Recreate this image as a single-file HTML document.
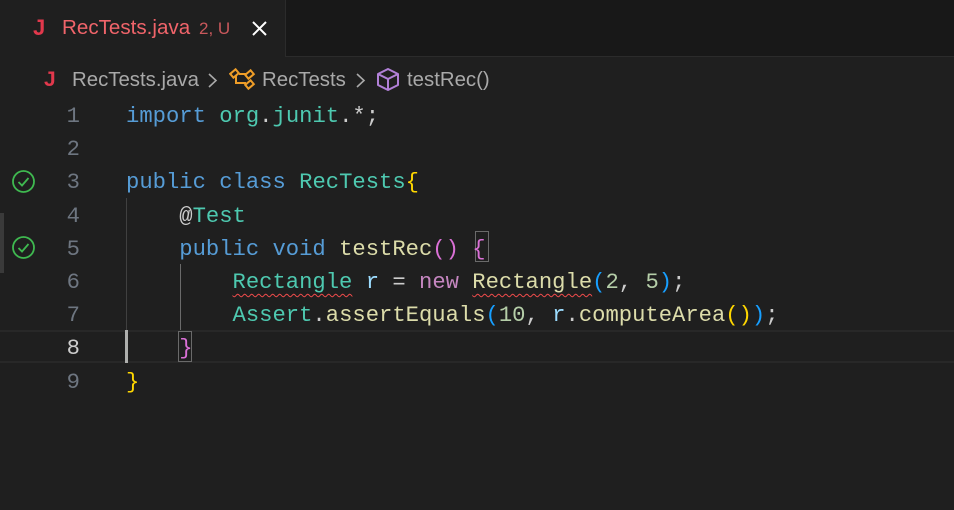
<!DOCTYPE html>
<html><head><style>
*{margin:0;padding:0;box-sizing:border-box}
body{width:954px;height:510px;background:#1f1f1f;overflow:hidden;position:relative;font-family:"Liberation Sans",sans-serif}
.tabbar{position:absolute;left:0;top:0;width:954px;height:57px;background:#181818}
.tabbar .rest{position:absolute;left:285px;top:0;right:0;height:57px;border-left:1px solid #2b2b2b;border-bottom:1px solid #2b2b2b}
.tab{position:absolute;left:0;top:0;width:285px;height:58px;background:#1f1f1f}
.code{position:absolute;left:0;top:100px;font-family:"Liberation Mono",monospace;font-size:22.2px;}
.ln{position:absolute;left:0;height:33.2px;line-height:33.2px;width:954px;white-space:pre}
.num{position:absolute;left:40px;width:40px;text-align:right;color:#6e7681}
.txt{position:absolute;left:126px}
.k{color:#569cd6}.t{color:#4ec9b0}.f{color:#dcdcaa}.p{color:#cccccc}.v{color:#9cdcfe}.n{color:#b5cea8}.m{color:#c586c0}.y{color:#ffd700}.pk{color:#da70d6}.b{color:#179fff}
.sq{text-decoration:underline wavy #f14c4c;text-decoration-thickness:1.3px;text-underline-offset:5px}
.guide{position:absolute;width:1px;background:#404040}
</style></head><body>
<div class="tabbar"><div class="rest"></div></div>
<div class="tab">
 <span style="position:absolute;left:33px;top:15px;color:#e2384c;font-weight:bold;font-size:22px">J</span>
 <span style="position:absolute;left:62px;top:16px;color:#f0646a;font-size:20.6px">RecTests.java</span>
 <span style="position:absolute;left:199px;top:19px;color:#c9585c;font-size:17px">2, U</span>
 <svg style="position:absolute;left:251px;top:20px" width="17" height="17"><path d="M2 2L15 15M15 2L2 15" stroke="#fff" stroke-width="2"/></svg>
</div>
<div style="position:absolute;left:0;top:64px;height:34px;font-size:20px;color:#a9a9a9;white-space:nowrap">
 <span style="position:absolute;left:44px;top:4px;color:#e2384c;font-weight:bold;font-size:21px">J</span>
 <span style="position:absolute;left:72px;top:5px;font-size:20.4px">RecTests.java</span>
 <svg style="position:absolute;left:206px;top:8px" width="12" height="17"><path d="M3 2L10 8.5L3 15" stroke="#a9a9a9" stroke-width="1.6" fill="none"/></svg>
 <svg style="position:absolute;left:229px;top:3px" width="28" height="24"><g stroke="#ee9d28" stroke-width="2" fill="none"><rect x="2" y="4" width="7" height="5" transform="rotate(-40 5.5 6.5)"/><rect x="17" y="5" width="7" height="5" transform="rotate(-40 20.5 7.5)"/><rect x="17" y="15" width="7" height="5" transform="rotate(-40 20.5 17.5)"/><path d="M7 9L7 16L17 16M10 7L17 7"/></g></svg>
 <span style="position:absolute;left:262px;top:5px;font-size:20.4px">RecTests</span>
 <svg style="position:absolute;left:354px;top:8px" width="12" height="17"><path d="M3 2L10 8.5L3 15" stroke="#a9a9a9" stroke-width="1.6" fill="none"/></svg>
 <svg style="position:absolute;left:376px;top:3px" width="26" height="26"><g stroke="#b180d7" stroke-width="2" fill="none" stroke-linejoin="round"><path d="M12 2L22 7L22 18L12 23L2 18L2 7Z"/><path d="M2 7L12 12L22 7M12 12L12 23"/></g></svg>
 <span style="position:absolute;left:407px;top:5px;font-size:20.4px">testRec()</span>
</div>
<div style="position:absolute;left:0;top:213px;width:4px;height:60px;background:#3a3a3a"></div>
<div style="position:absolute;left:0;top:330px;width:954px;height:33px;border-top:2px solid #282828;border-bottom:2px solid #282828"></div>
<div style="position:absolute;left:125px;top:330px;width:3px;height:33px;background:#aeafad"></div>
<div class="guide" style="left:126px;top:198px;height:132px"></div>
<div class="guide" style="left:180px;top:264px;height:66px;background:#6a6a6a"></div>
<div style="position:absolute;left:475px;top:231px;width:14px;height:31px;border:1px solid #6a6a6a"></div>
<div style="position:absolute;left:178px;top:331px;width:14px;height:31px;border:1px solid #6a6a6a"></div>
<svg style="position:absolute;left:11px;top:169px" width="25" height="25"><circle cx="12.5" cy="12.5" r="10.5" stroke="#3fb950" stroke-width="1.8" fill="none"/><path d="M7.5 13L11 16.5L17.5 9" stroke="#3fb950" stroke-width="1.8" fill="none"/></svg>
<svg style="position:absolute;left:11px;top:235px" width="25" height="25"><circle cx="12.5" cy="12.5" r="10.5" stroke="#3fb950" stroke-width="1.8" fill="none"/><path d="M7.5 13L11 16.5L17.5 9" stroke="#3fb950" stroke-width="1.8" fill="none"/></svg>
<div class="code">
<div class="ln" style="top:0"><span class="num">1</span><span class="txt"><span class="k">import</span> <span class="t">org</span><span class="p">.</span><span class="t">junit</span><span class="p">.*;</span></span></div>
<div class="ln" style="top:33.2px"><span class="num">2</span></div>
<div class="ln" style="top:66.4px"><span class="num">3</span><span class="txt"><span class="k">public</span> <span class="k">class</span> <span class="t">RecTests</span><span class="y">{</span></span></div>
<div class="ln" style="top:99.6px"><span class="num">4</span><span class="txt">    <span class="p">@</span><span class="t">Test</span></span></div>
<div class="ln" style="top:132.8px"><span class="num">5</span><span class="txt">    <span class="k">public</span> <span class="k">void</span> <span class="f">testRec</span><span class="pk">()</span> <span class="pk">{</span></span></div>
<div class="ln" style="top:166px"><span class="num">6</span><span class="txt">        <span class="t sq">Rectangle</span> <span class="v">r</span> <span class="p">=</span> <span class="m">new</span> <span class="f sq">Rectangle</span><span class="b">(</span><span class="n">2</span><span class="p">,</span> <span class="n">5</span><span class="b">)</span><span class="p">;</span></span></div>
<div class="ln" style="top:199.2px"><span class="num">7</span><span class="txt">        <span class="t">Assert</span><span class="p">.</span><span class="f">assertEquals</span><span class="b">(</span><span class="n">10</span><span class="p">,</span> <span class="v">r</span><span class="p">.</span><span class="f">computeArea</span><span class="y">()</span><span class="b">)</span><span class="p">;</span></span></div>
<div class="ln" style="top:232.4px"><span class="num" style="color:#cccccc">8</span><span class="txt">    <span class="pk">}</span></span></div>
<div class="ln" style="top:265.6px"><span class="num">9</span><span class="txt"><span class="y">}</span></span></div>
</div>
</body></html>
